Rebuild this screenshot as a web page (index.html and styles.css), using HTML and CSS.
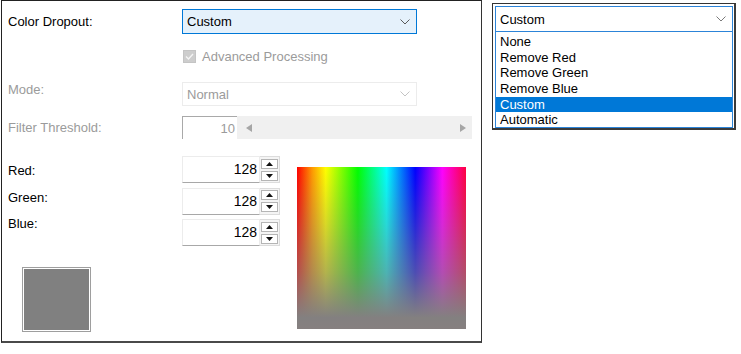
FILE: index.html
```html
<!DOCTYPE html>
<html>
<head>
<meta charset="utf-8">
<link rel="stylesheet" href="styles.css">
</head>
<body>
<div class="page">
  <section class="panel main">
    <div class="row r-dropout">
      <span class="lbl">Color Dropout:</span>
      <div class="combo focus">
        <span>Custom</span>
        <svg class="chev" width="10" height="6" viewBox="0 0 10 6"><path d="M0.5 0.5 L5 5 L9.5 0.5" fill="none" stroke="#5a5a5a" stroke-width="1"/></svg>
      </div>
    </div>
    <div class="row r-adv">
      <span class="lbl"></span>
      <div class="check">
        <span class="box"><svg width="11" height="11" viewBox="0 0 11 11"><path d="M2 5.5 L4.5 8 L9 3" fill="none" stroke="#f4f4f4" stroke-width="1.4"/></svg></span>
        <span class="dis">Advanced Processing</span>
      </div>
    </div>
    <div class="row r-mode">
      <span class="lbl dis top">Mode:</span>
      <div class="combo disabled">
        <span class="dis">Normal</span>
        <svg class="chev" width="10" height="6" viewBox="0 0 10 6"><path d="M0.5 0.5 L5 5 L9.5 0.5" fill="none" stroke="#c4c4c4" stroke-width="1"/></svg>
      </div>
    </div>
    <div class="row r-filter">
      <span class="lbl dis">Filter Threshold:</span>
      <div class="threshold">
        <div class="tb dis">10</div>
        <div class="track">
          <svg width="6" height="8" viewBox="0 0 6 8"><path d="M6 0 L0 4 L6 8 Z" fill="#a6a6a6"/></svg>
          <svg width="6" height="8" viewBox="0 0 6 8"><path d="M0 0 L6 4 L0 8 Z" fill="#a6a6a6"/></svg>
        </div>
      </div>
    </div>
    <div class="lower">
      <div class="lower-left">
        <div class="rgb">
          <div class="labels">
            <span>Red:</span>
            <span>Green:</span>
            <span>Blue:</span>
          </div>
          <div class="spins">
            <div class="spin">
              <div class="val">128</div>
              <div class="btns">
                <span class="btn"><svg width="7" height="4" viewBox="0 0 7 4"><path d="M0 4 L3.5 0 L7 4 Z" fill="#111"/></svg></span>
                <span class="btn"><svg width="7" height="4" viewBox="0 0 7 4"><path d="M0 0 L3.5 4 L7 0 Z" fill="#111"/></svg></span>
              </div>
            </div>
            <div class="spin">
              <div class="val">128</div>
              <div class="btns">
                <span class="btn"><svg width="7" height="4" viewBox="0 0 7 4"><path d="M0 4 L3.5 0 L7 4 Z" fill="#111"/></svg></span>
                <span class="btn"><svg width="7" height="4" viewBox="0 0 7 4"><path d="M0 0 L3.5 4 L7 0 Z" fill="#111"/></svg></span>
              </div>
            </div>
            <div class="spin">
              <div class="val">128</div>
              <div class="btns">
                <span class="btn"><svg width="7" height="4" viewBox="0 0 7 4"><path d="M0 4 L3.5 0 L7 4 Z" fill="#111"/></svg></span>
                <span class="btn"><svg width="7" height="4" viewBox="0 0 7 4"><path d="M0 0 L3.5 4 L7 0 Z" fill="#111"/></svg></span>
              </div>
            </div>
          </div>
        </div>
        <div class="swatch"><div class="swatch-fill"></div></div>
      </div>
      <div class="spectrum"></div>
    </div>
  </section>

  <section class="panel drop">
    <div class="combo open">
      <span>Custom</span>
      <svg class="chev" width="10" height="6" viewBox="0 0 10 6"><path d="M0.5 0.5 L5 5 L9.5 0.5" fill="none" stroke="#7a7a7a" stroke-width="1"/></svg>
    </div>
    <ul class="list">
      <li>None</li>
      <li>Remove Red</li>
      <li>Remove Green</li>
      <li>Remove Blue</li>
      <li class="sel">Custom</li>
      <li>Automatic</li>
    </ul>
  </section>
</div>
</body>
</html>
```
FILE: styles.css
```css
* { box-sizing: border-box; }

body {
  margin: 0;
  background: #ffffff;
  font-family: "Liberation Sans", Arial, sans-serif;
  font-size: 13px;
  color: #000;
}

.page {
  display: flex;
  align-items: flex-start;
  padding-left: 1px;
}

.panel {
  background: #fff;
}

.main {
  width: 481px;
  height: 343px;
  border-top: 1px solid #222;
  border-left: 1px solid #222;
  border-right: 1px solid #333;
  border-bottom: 2px solid #4a4a4a;
  padding-left: 6px;
  display: flex;
  flex-direction: column;
}

.row {
  display: flex;
  align-items: center;
}

.lbl {
  width: 174px;
  flex: none;
  line-height: 15px;
}

.lbl.top { align-self: flex-start; }

.dis { color: #9b9b9b; }

.r-dropout { margin-top: 8px; height: 25px; }
.r-adv { margin-top: 13px; height: 18px; }
.r-mode { margin-top: 17px; height: 24px; }
.r-filter { margin-top: 10px; height: 23px; }

.combo {
  width: 235px;
  height: 100%;
  display: flex;
  align-items: center;
  justify-content: space-between;
  padding: 0 6px 0 4px;
  border: 1px solid #d9d9d9;
}

.combo.focus {
  background: #e5f1fb;
  border-color: #0078d7;
}

.combo.disabled {
  background: #fff;
  border-color: #ececec;
}

.chev { flex: none; }

.check {
  display: flex;
  align-items: center;
  gap: 6px;
}

.box {
  width: 13px;
  height: 13px;
  background: #cdcdcd;
  border: 1px solid #c4c4c4;
  display: flex;
  align-items: center;
  justify-content: center;
  margin-left: 1px;
}

.threshold {
  display: flex;
  height: 100%;
}

.tb {
  width: 55px;
  height: 100%;
  border-top: 1px solid #a9a9a9;
  border-left: 1px solid #a9a9a9;
  text-align: right;
  padding-right: 2px;
  line-height: 23px;
}

.track {
  width: 235px;
  height: 100%;
  background: #f0f0f0;
  display: flex;
  align-items: center;
  justify-content: space-between;
  padding: 0 6px 0 9px;
}

.lower {
  margin-top: 16px;
  display: flex;
}

.lower-left {
  width: 272px;
  flex: none;
  display: flex;
  flex-direction: column;
}

.rgb {
  display: flex;
}

.labels {
  width: 174px;
  display: flex;
  flex-direction: column;
  gap: 11.7px;
  padding-top: 8px;
  line-height: 15px;
}

.spins {
  display: flex;
  flex-direction: column;
  gap: 4.5px;
  padding-top: 1px;
}

.spin {
  display: flex;
  width: 98px;
  height: 27px;
}

.val {
  width: 78px;
  height: 100%;
  background: #fff;
  border: 1px solid #ececec;
  border-bottom: 1px solid #a8a8a8;
  text-align: right;
  padding-right: 2px;
  line-height: 25px;
  font-size: 14px;
}

.btns {
  width: 20px;
  display: flex;
  flex-direction: column;
  justify-content: center;
  gap: 2px;
  padding: 0 1px;
  background: #f4f4f4;
  border: 1px solid #dcdcdc;
  border-left: none;
}

.btn {
  height: 10px;
  background: #fff;
  border: 1px solid #b5b5b5;
  display: flex;
  align-items: center;
  justify-content: center;
}

.swatch {
  margin-top: 21px;
  margin-left: 14px;
  width: 69px;
  height: 65px;
  border: 1px solid #9e9e9e;
  padding: 1px;
  background: #fff;
}

.swatch-fill {
  width: 100%;
  height: 100%;
  background: #808080;
}

.spectrum {
  margin-left: 17px;
  margin-top: 12px;
  width: 169px;
  height: 162px;
  background:
    linear-gradient(to bottom, rgba(128,128,128,0) 0%, rgba(128,128,128,0.3) 35%, rgba(128,128,128,0.6) 65%, #838080 93%, #868080 100%),
    linear-gradient(to right, #ff0000 0%, #ff9900 9%, #ffff00 17%, #00ff00 36%, #00ffff 53%, #0000ff 70%, #ff00ff 86%, #ff0040 100%);
}

.drop {
  margin-left: 10px;
  margin-top: 3px;
  width: 244px;
  border-top: 1px solid #333;
  border-left: 1px solid #333;
  border-right: 2px solid #3a3a3a;
  border-bottom: 2px solid #3a3a3a;
  padding: 2px 1px 0 2px;
}

.combo.open {
  width: 238px;
  height: 26px;
  border-color: #2c84d8;
  background: #fff;
  padding-right: 6px;
}

.list {
  list-style: none;
  margin: 0;
  padding: 2px 0 0 0;
  width: 238px;
  height: 96px;
  border: 1px solid #2c84d8;
  border-top: none;
}

.list li {
  height: 15.7px;
  line-height: 15.7px;
  padding-left: 4px;
}

.list li.sel {
  background: #0078d7;
  color: #fff;
}
```
